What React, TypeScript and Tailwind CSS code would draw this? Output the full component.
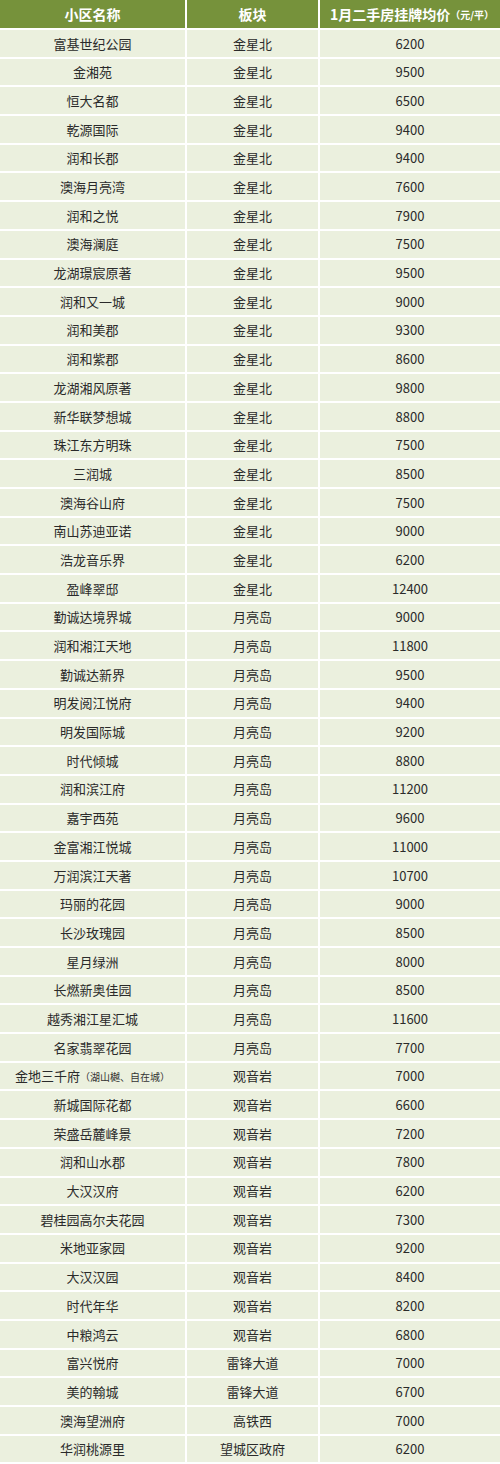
import React from "react";

type Row = [string, string, string, string?];

const rows: Row[] = [
  ["富基世纪公园", "金星北", "6200"],
  ["金湘苑", "金星北", "9500"],
  ["恒大名都", "金星北", "6500"],
  ["乾源国际", "金星北", "9400"],
  ["润和长郡", "金星北", "9400"],
  ["澳海月亮湾", "金星北", "7600"],
  ["润和之悦", "金星北", "7900"],
  ["澳海澜庭", "金星北", "7500"],
  ["龙湖璟宸原著", "金星北", "9500"],
  ["润和又一城", "金星北", "9000"],
  ["润和美郡", "金星北", "9300"],
  ["润和紫郡", "金星北", "8600"],
  ["龙湖湘风原著", "金星北", "9800"],
  ["新华联梦想城", "金星北", "8800"],
  ["珠江东方明珠", "金星北", "7500"],
  ["三润城", "金星北", "8500"],
  ["澳海谷山府", "金星北", "7500"],
  ["南山苏迪亚诺", "金星北", "9000"],
  ["浩龙音乐界", "金星北", "6200"],
  ["盈峰翠邸", "金星北", "12400"],
  ["勤诚达境界城", "月亮岛", "9000"],
  ["润和湘江天地", "月亮岛", "11800"],
  ["勤诚达新界", "月亮岛", "9500"],
  ["明发阅江悦府", "月亮岛", "9400"],
  ["明发国际城", "月亮岛", "9200"],
  ["时代倾城", "月亮岛", "8800"],
  ["润和滨江府", "月亮岛", "11200"],
  ["嘉宇西苑", "月亮岛", "9600"],
  ["金富湘江悦城", "月亮岛", "11000"],
  ["万润滨江天著", "月亮岛", "10700"],
  ["玛丽的花园", "月亮岛", "9000"],
  ["长沙玫瑰园", "月亮岛", "8500"],
  ["星月绿洲", "月亮岛", "8000"],
  ["长燃新奥佳园", "月亮岛", "8500"],
  ["越秀湘江星汇城", "月亮岛", "11600"],
  ["名家翡翠花园", "月亮岛", "7700"],
  ["金地三千府", "观音岩", "7000", "（湖山樾、自在城）"],
  ["新城国际花都", "观音岩", "6600"],
  ["荣盛岳麓峰景", "观音岩", "7200"],
  ["润和山水郡", "观音岩", "7800"],
  ["大汉汉府", "观音岩", "6200"],
  ["碧桂园高尔夫花园", "观音岩", "7300"],
  ["米地亚家园", "观音岩", "9200"],
  ["大汉汉园", "观音岩", "8400"],
  ["时代年华", "观音岩", "8200"],
  ["中粮鸿云", "观音岩", "6800"],
  ["富兴悦府", "雷锋大道", "7000"],
  ["美的翰城", "雷锋大道", "6700"],
  ["澳海望洲府", "高铁西", "7000"],
  ["华润桃源里", "望城区政府", "6200"],
];

const font = "font-['Noto_Sans_CJK_SC','Noto_Sans',sans-serif]";

const App = () => {
  return (
    <div className={`w-[500px] h-[1464px] bg-white overflow-hidden ${font}`}>
      <div className="grid grid-cols-[185px_131px_1fr] gap-x-[2px] gap-y-[2px]">
        <div className="h-[28px] bg-[#76923b] text-white font-bold text-[14px] flex items-center justify-center">
          小区名称
        </div>
        <div className="h-[28px] bg-[#76923b] text-white font-bold text-[14px] flex items-center justify-center">
          板块
        </div>
        <div className="h-[28px] bg-[#76923b] text-white font-bold text-[14px] flex items-center justify-center pl-[4px]">
          1月二手房挂牌均价
          <span className="text-[10px] font-bold">（元/平）</span>
        </div>

        {rows.map(([name, area, price, note], i) => (
          <React.Fragment key={i}>
            <div className="h-[26.7px] bg-[#ebf0de] text-[#2a2a2a] text-[13px] flex items-center justify-center">
              {name}
              {note && <span className="text-[10px] text-[#333]">{note}</span>}
            </div>
            <div className="h-[26.7px] bg-[#ebf0de] text-[#2a2a2a] text-[13px] flex items-center justify-center">
              {area}
            </div>
            <div className="h-[26.7px] bg-[#ebf0de] text-[#2a2a2a] text-[13px] flex items-center justify-center">
              {price}
            </div>
          </React.Fragment>
        ))}
      </div>
    </div>
  );
};

export default App;
